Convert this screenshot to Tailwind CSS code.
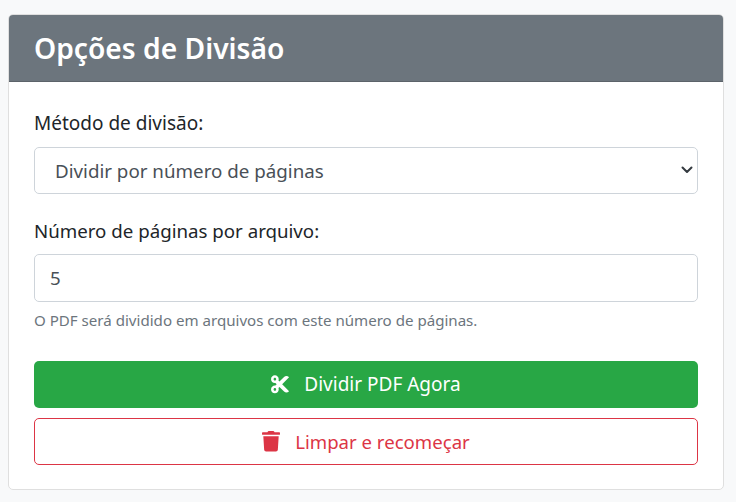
<!DOCTYPE html>
<html lang="pt-BR">
<head>
    <meta charset="utf-8">
    <script src="https://cdn.jsdelivr.net/npm/@tailwindcss/browser@4"></script>
    <title>Opções de Divisão</title>
</head>
<body class="bg-[#f8f9fa] font-['Noto_Sans',sans-serif] text-[#212529]">

<div class="pt-[14px] pl-2 pr-3">
    <div class="bg-white border border-[#dfdfdf] rounded-[5px] overflow-hidden">
        <div class="bg-[#6c757d] border-b border-[#5c636a] h-[67px] px-[25px] pt-[1px] flex items-center">
            <h2 class="text-[28.2px] font-semibold leading-none text-white">Opções de Divisão</h2>
        </div>
        <div class="px-[25px] pt-[28px] pb-[24px]">
            <label class="block text-[19px] leading-[27px] mb-[10px]">Método de divisão:</label>
            <div class="relative mb-[23px]">
                <select class="block w-full h-[47px] pl-[20px] pr-9 pt-[2px] text-[18.75px] text-[#495057] bg-white border border-[#ced4da] rounded-[5px] appearance-none">
                    <option>Dividir por número de páginas</option>
                </select>
                <svg class="absolute right-[3px] top-[17px] w-[16px] h-[12px] text-[#343a40]" viewBox="0 0 16 12" fill="none" stroke="currentColor" stroke-width="2" stroke-linecap="round" stroke-linejoin="round"><path d="M3.5 3.5 8 8l4.5-4.5"/></svg>
            </div>
            <label class="block text-[18.7px] leading-[27px] mb-[10px]">Número de páginas por arquivo:</label>
            <input type="number" value="5" class="block w-full h-[48px] px-[15px] pb-[2px] text-[18.7px] text-[#495057] bg-white border border-[#ced4da] rounded-[5px] appearance-none [&::-webkit-inner-spin-button]:appearance-none">
            <p class="text-[15.1px] leading-[21px] text-[#6c757d] mt-[8px] mb-[30px]">O PDF será dividido em arquivos com este número de páginas.</p>
            <button class="w-full h-[47px] mb-[10px] flex items-center justify-center gap-[15px] bg-[#28a745] text-white text-[19px] rounded-[5px]">
                <svg class="w-[18px] h-[20.5px]" viewBox="0 0 448 512" fill="currentColor"><path d="M278.06 256L444.48 89.57c4.69-4.69 4.69-12.29 0-16.97-32.8-32.8-85.99-32.8-118.79 0L210.18 188.12l-24.86-24.86c4.31-10.92 6.68-22.81 6.68-35.26 0-53.02-42.98-96-96-96S0 74.98 0 128s42.98 96 96 96c4.54 0 8.99-.32 13.36-.93L142.29 256l-32.93 32.93c-4.37-.61-8.83-.93-13.36-.93-53.02 0-96 42.98-96 96s42.98 96 96 96 96-42.98 96-96c0-12.45-2.37-24.34-6.68-35.26l24.86-24.86L325.69 439.4c32.8 32.8 85.99 32.8 118.79 0 4.69-4.68 4.69-12.28 0-16.97L278.06 256zM96 160c-17.64 0-32-14.36-32-32s14.36-32 32-32 32 14.36 32 32-14.36 32-32 32zm0 256c-17.64 0-32-14.36-32-32s14.36-32 32-32 32 14.36 32 32-14.36 32-32 32z"/></svg>
                Dividir PDF Agora
            </button>
            <button class="w-full h-[47px] flex items-center justify-center gap-[15px] bg-white text-[#dc3545] border border-[#dc3545] text-[18.6px] rounded-[5px]">
                <svg class="w-[18px] h-[20.5px]" viewBox="0 0 448 512" fill="currentColor"><path d="M432 32H312l-9.4-18.7A24 24 0 0 0 281.1 0H166.8a23.72 23.72 0 0 0-21.4 13.3L136 32H16A16 16 0 0 0 0 48v32a16 16 0 0 0 16 16h416a16 16 0 0 0 16-16V48a16 16 0 0 0-16-16zM53.2 467a48 48 0 0 0 47.9 45h245.8a48 48 0 0 0 47.9-45L416 128H32z"/></svg>
                Limpar e recomeçar
            </button>
        </div>
    </div>
</div>

</body>
</html>
